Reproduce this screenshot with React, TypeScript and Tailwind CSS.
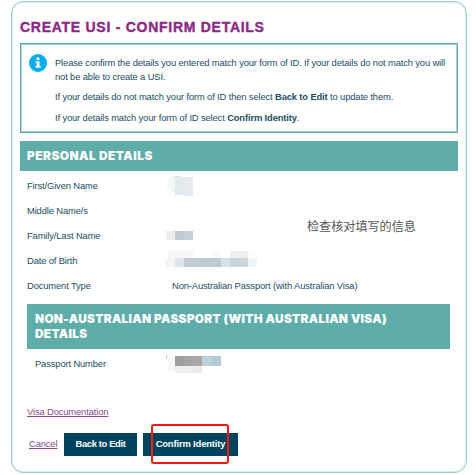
import React from "react";

type Block = [x: number, y: number, w: number, h: number, fill: string];

interface Row {
  label: string;
  value?: string;
  mask?: Block[];
}

// Blocks are relative to the left edge of the value column
const rows: Row[] = [
  {
    label: "First/Given Name",
    mask: [
      [1, 7, 8, 9, "#f7f8f8"],
      [4, 4, 5, 15, "#f5f6f7"],
      [9, 4, 9, 18, "#e3eaed"],
      [18, 4, 9, 19, "#e5ebee"],
      [7, 3, 8, 1, "#d2ebe8"],
    ],
  },
  { label: "Middle Name/s" },
  {
    label: "Family/Last Name",
    mask: [
      [0, 8, 9, 9, "#ececeb"],
      [9, 8, 9, 9, "#bfcad1"],
      [18, 8, 9, 9, "#c5d0d8"],
    ],
  },
  {
    label: "Date of Birth",
    mask: [
      [2, 3, 7, 8, "#f8f7f8"],
      [9, 3, 18, 7, "#f6f7f9"],
      [46, 3, 9, 7, "#f7f9fa"],
      [64, 3, 18, 7, "#ebf0f2"],
      [82, 4, 9, 6, "#fafcfd"],
      [0, 10, 9, 9, "#f5f3f5"],
      [9, 10, 9, 9, "#dfe4ec"],
      [18, 10, 18, 9, "#c0ccd2"],
      [36, 10, 19, 9, "#bccad1"],
      [55, 10, 9, 9, "#d8e2e6"],
      [64, 10, 9, 9, "#c6d5da"],
      [73, 10, 9, 9, "#cfd6d9"],
      [82, 10, 9, 9, "#eff6fb"],
    ],
  },
  { label: "Document Type", value: "Non-Australian Passport (with Australian Visa)" },
];

const passportMask: Block[] = [
  [0, 4, 1, 4, "#c3c3c3"],
  [2, 6, 7, 14, "#f6f6f6"],
  [9, 5, 9, 10, "#a19d9b"],
  [18, 5, 9, 10, "#a7a5a4"],
  [27, 5, 9, 10, "#aaa8a7"],
  [36, 5, 10, 10, "#bed0dc"],
  [46, 5, 9, 10, "#b4c9d4"],
  [9, 15, 18, 7, "#f0f0f0"],
  [27, 15, 9, 7, "#eeecea"],
];

const Mask = ({ blocks }: { blocks: Block[] }) => (
  <svg width="92" height="25" viewBox="0 0 92 25" shapeRendering="crispEdges">
    {blocks.map(([x, y, w, h, fill], index) => (
      <rect key={index} x={x} y={y} width={w} height={h} fill={fill} />
    ))}
  </svg>
);

const InfoIcon = () => (
  <svg className="h-[18px] w-[18px] shrink-0" viewBox="0 0 18 18">
    <circle cx="9" cy="9" r="9" fill="#00adee" />
    <rect x="7.6" y="3.6" width="2.9" height="2.4" rx="0.5" fill="#fff" />
    <path d="M6.6 7.2h3.9v4.9h1.2v1.7H6.5v-1.7h1.2V8.9H6.6z" fill="#fff" />
  </svg>
);

const App = () => {
  return (
    <div className="h-[475px] w-[476px] bg-white pl-[11px] pt-px font-['Liberation_Sans','Noto_Sans_CJK_SC',sans-serif] text-[9.4px] tracking-[-0.135px] text-[#214e66]">
      <div className="h-[472px] w-[456px] rounded-xl border border-[#9dcdca] pl-2 pt-[17px] shadow-[inset_0_0_0_1px_#dbeeed]">
        <h1 className="h-[24px] whitespace-nowrap text-[14px] font-bold leading-4 tracking-[0.73px] text-[#8b2a85] [-webkit-text-stroke:0.4px_#8b2a85]">
          CREATE USI - CONFIRM DETAILS
        </h1>

        <section className="flex h-[90px] w-[438px] gap-2 border border-[#5fada9] pl-2 pt-[10px] shadow-[inset_0_0_0_1px_#a9d4d1]">
          <InfoIcon />
          <div className="space-y-[7px] whitespace-nowrap pt-[2px] leading-[13.5px]">
            <p>
              Please confirm the details you entered match your form of ID. If your details do not match you will
              <br />
              not be able to create a USI.
            </p>
            <p>
              If your details do not match your form of ID then select <b>Back to Edit</b> to update them.
            </p>
            <p>
              If your details match your form of ID select <b>Confirm Identity</b>.
            </p>
          </div>
        </section>

        <h2 className="mt-2 flex h-[30px] w-[438px] items-center bg-[#5fada9] pl-[7px] pt-px font-['Inter',sans-serif] text-[11.8px] font-black tracking-[0.52px] text-white">
          PERSONAL DETAILS
        </h2>

        <div className="relative pt-[2px]">
          {rows.map((row) => (
            <div key={row.label} className="flex h-[25px] items-center pl-[7px]">
              <span className="w-[139px] pt-px">{row.label}</span>
              {row.mask && <Mask blocks={row.mask} />}
              {row.value && <span className="whitespace-nowrap pl-[6px] pt-px">{row.value}</span>}
            </div>
          ))}
          <p className="absolute left-[287px] top-[46px] whitespace-nowrap font-['Noto_Sans_CJK_SC',sans-serif] text-[12.1px] leading-[18px] tracking-normal text-[#555]">
            检查核对填写的信息
          </p>
        </div>

        <div className="ml-[7px] mt-[6px] w-[423px]">
          <h2 className="h-[45px] bg-[#5fada9] pl-2 pt-2 font-['Inter',sans-serif] text-[11.8px] font-black leading-[15px] tracking-[0.32px] text-white">
            NON-AUSTRALIAN PASSPORT (WITH AUSTRALIAN VISA)
            <br />
            DETAILS
          </h2>
          <div className="mt-[2px] flex h-[25px] items-center pl-2">
            <span className="w-[131px] pt-px">Passport Number</span>
            <Mask blocks={passportMask} />
          </div>
        </div>

        <a href="#" className="ml-[7px] mt-[29px] block w-fit leading-[13px] text-[#8b4a90] underline">
          Visa Documentation
        </a>

        <div className="mt-[15px] flex h-[23px] items-center pl-[9px]">
          <a href="#" className="w-[35px] text-[#8b4a90] underline">
            Cancel
          </a>
          <button className="h-full w-[73px] bg-[#00435e] font-bold tracking-[-0.36px] text-white">Back to Edit</button>
          <div className="relative ml-[6px] h-full">
            <button className="h-full w-[95px] bg-[#00435e] font-bold text-white">Confirm Identity</button>
            <span className="absolute -top-[9px] left-[8px] h-[40px] w-[78px] rounded-[3px] border-2 border-[#f5180f]" />
          </div>
        </div>
      </div>
    </div>
  );
};

export default App;
